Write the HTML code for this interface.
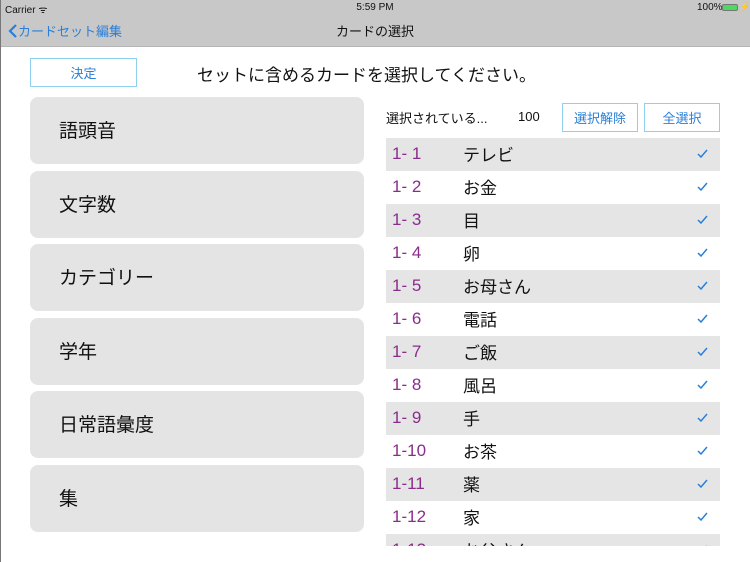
<!DOCTYPE html>
<html><head><meta charset="utf-8"><style>
*{margin:0;padding:0;box-sizing:border-box}
body{width:750px;height:562px;overflow:hidden;background:#fff;font-family:"Liberation Sans","Noto Sans CJK JP",sans-serif;position:relative}
.a{position:absolute}
.nav{left:0;top:0;width:750px;height:47px;background:#c8c8c8;border-bottom:1px solid #b5b5b5}
.btn{position:absolute;border:1px solid #8fd0f0;color:#2a7fd8;font-size:13px;display:flex;align-items:center;justify-content:center;background:#fff}
.p{position:absolute;left:30px;width:334px;height:67px;background:#e4e4e4;border-radius:8px;font-size:19px;color:#111;padding-left:29px;display:flex;align-items:center;padding-bottom:2px}
.r{position:absolute;left:386px;width:334px;height:33px;display:flex;align-items:center;font-size:17px;padding-bottom:2px}
.r.g{background:#e5e5e5}
.n{color:#8a2c8c;width:77px;padding-left:6px}
.w{color:#111;flex:1}
.c{margin-right:12px;width:11px;height:9px}
</style></head><body>
<div class="a nav">
<div class="a" style="left:5px;top:2px;font-size:10px;color:#111">Carrier ᯤ</div>
<div class="a" style="left:0;width:750px;top:2px;text-align:center;font-size:10px;color:#111">5:59 PM</div>
<div class="a" style="left:697px;top:2px;font-size:10px;color:#111">100%</div>
<div class="a" style="left:722px;top:4px;width:16px;height:7px;background:#4cd964;border:1px solid #777;border-radius:2px"></div>
<div class="a" style="left:740px;top:2px;font-size:8px">⚡</div>
<div class="a" style="left:8px;top:21px;font-size:13px;color:#2a7fd8"><svg width="10" height="14" style="vertical-align:-2px" viewBox="0 0 10 14"><path d="M8 1L2 7l6 6" stroke="#2a7fd8" stroke-width="2.2" fill="none"/></svg>カードセット編集</div>
<div class="a" style="left:0;width:750px;top:21px;text-align:center;font-size:13px;color:#111">カードの選択</div>
</div>
<div class="a" style="left:0;top:0;width:1px;height:562px;background:#777"></div>
<div class="btn" style="left:30px;top:58px;width:107px;height:29px">決定</div>
<div class="a" style="left:197px;top:61px;font-size:17px;color:#111">セットに含めるカードを選択してください。</div>
<div class="p" style="top:97px">語頭音</div>
<div class="p" style="top:171px">文字数</div>
<div class="p" style="top:244px">カテゴリー</div>
<div class="p" style="top:318px">学年</div>
<div class="p" style="top:391px">日常語彙度</div>
<div class="p" style="top:465px">集</div>
<div class="a" style="left:386px;top:108px;font-size:13px;color:#111">選択されている...</div>
<div class="a" style="left:518px;top:109px;font-size:13px;color:#111">100</div>
<div class="btn" style="left:562px;top:103px;width:76px;height:29px">選択解除</div>
<div class="btn" style="left:644px;top:103px;width:76px;height:29px">全選択</div>
<svg width="0" height="0" style="position:absolute"><defs><symbol id="ck" viewBox="0 0 11 9"><path d="M1 5l3 3 6-7" stroke="#2a7fd8" stroke-width="1.5" fill="none"/></symbol></defs></svg>
<div class="a" style="left:0;top:138px;width:750px;height:408px;overflow:hidden">
<div style="position:relative;top:-138px">
<div class="r g" style="top:138px"><span class="n">1- 1</span><span class="w">テレビ</span><svg class="c"><use href="#ck"/></svg></div>
<div class="r" style="top:171px"><span class="n">1- 2</span><span class="w">お金</span><svg class="c"><use href="#ck"/></svg></div>
<div class="r g" style="top:204px"><span class="n">1- 3</span><span class="w">目</span><svg class="c"><use href="#ck"/></svg></div>
<div class="r" style="top:237px"><span class="n">1- 4</span><span class="w">卵</span><svg class="c"><use href="#ck"/></svg></div>
<div class="r g" style="top:270px"><span class="n">1- 5</span><span class="w">お母さん</span><svg class="c"><use href="#ck"/></svg></div>
<div class="r" style="top:303px"><span class="n">1- 6</span><span class="w">電話</span><svg class="c"><use href="#ck"/></svg></div>
<div class="r g" style="top:336px"><span class="n">1- 7</span><span class="w">ご飯</span><svg class="c"><use href="#ck"/></svg></div>
<div class="r" style="top:369px"><span class="n">1- 8</span><span class="w">風呂</span><svg class="c"><use href="#ck"/></svg></div>
<div class="r g" style="top:402px"><span class="n">1- 9</span><span class="w">手</span><svg class="c"><use href="#ck"/></svg></div>
<div class="r" style="top:435px"><span class="n">1-10</span><span class="w">お茶</span><svg class="c"><use href="#ck"/></svg></div>
<div class="r g" style="top:468px"><span class="n">1-11</span><span class="w">薬</span><svg class="c"><use href="#ck"/></svg></div>
<div class="r" style="top:501px"><span class="n">1-12</span><span class="w">家</span><svg class="c"><use href="#ck"/></svg></div>
<div class="r g" style="top:534px"><span class="n">1-13</span><span class="w">お父さん</span><svg class="c"><use href="#ck"/></svg></div>
</div></div>
</body></html>
